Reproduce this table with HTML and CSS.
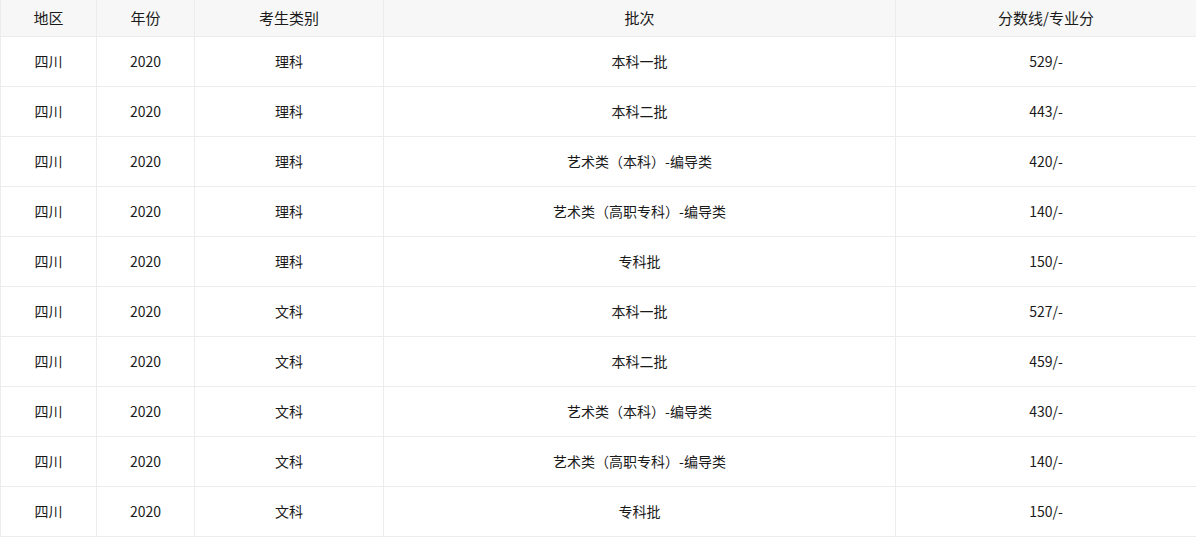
FILE: index.html
```html
<!DOCTYPE html>
<html lang="zh">
<head>
<meta charset="utf-8">
<link rel="stylesheet" href="styles.css">
</head>
<body>
<table class="score-table">
  <colgroup>
    <col class="c1"><col class="c2"><col class="c3"><col class="c4"><col class="c5">
  </colgroup>
  <thead>
    <tr><th>地区</th><th>年份</th><th>考生类别</th><th>批次</th><th>分数线/专业分</th></tr>
  </thead>
  <tbody>
    <tr><td>四川</td><td>2020</td><td>理科</td><td>本科一批</td><td>529/-</td></tr>
    <tr><td>四川</td><td>2020</td><td>理科</td><td>本科二批</td><td>443/-</td></tr>
    <tr><td>四川</td><td>2020</td><td>理科</td><td>艺术类（本科）-编导类</td><td>420/-</td></tr>
    <tr><td>四川</td><td>2020</td><td>理科</td><td>艺术类（高职专科）-编导类</td><td>140/-</td></tr>
    <tr><td>四川</td><td>2020</td><td>理科</td><td>专科批</td><td>150/-</td></tr>
    <tr><td>四川</td><td>2020</td><td>文科</td><td>本科一批</td><td>527/-</td></tr>
    <tr><td>四川</td><td>2020</td><td>文科</td><td>本科二批</td><td>459/-</td></tr>
    <tr><td>四川</td><td>2020</td><td>文科</td><td>艺术类（本科）-编导类</td><td>430/-</td></tr>
    <tr><td>四川</td><td>2020</td><td>文科</td><td>艺术类（高职专科）-编导类</td><td>140/-</td></tr>
    <tr><td>四川</td><td>2020</td><td>文科</td><td>专科批</td><td>150/-</td></tr>
  </tbody>
</table>
</body>
</html>
```
FILE: styles.css
```css
html, body {
  margin: 0;
  padding: 0;
  background: #fff;
}
.score-table {
  width: 1196px;
  table-layout: fixed;
  border-collapse: collapse;
  font-family: "Noto Sans CJK SC", "Microsoft YaHei", sans-serif;
  color: #1a1a1a;
}
.c1 { width: 96px; }
.c2 { width: 98px; }
.c3 { width: 189px; }
.c4 { width: 512px; }
.c5 { width: 301px; }
.score-table th,
.score-table td {
  border: 1px solid #ececec;
  text-align: center;
  padding: 0;
  font-weight: normal;
}
.score-table th {
  background: #f7f7f7;
  height: 34px;
  padding-bottom: 2px;
  font-size: 15px;
  border-top: none;
}
.score-table td {
  height: 47px;
  padding-bottom: 2px;
  font-size: 14px;
}
```
